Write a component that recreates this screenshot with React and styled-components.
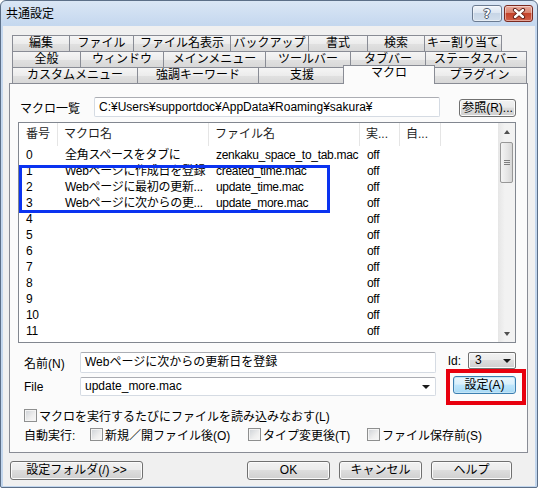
import React from "react";
import styled, { createGlobalStyle } from "styled-components";

const GlobalStyle = createGlobalStyle`
  *, *::before, *::after { box-sizing: border-box; }
  html, body { margin: 0; padding: 0; background: #ffffff; }
  body {
    font-family: "Liberation Sans", "Noto Sans CJK JP", sans-serif;
    font-size: 12px;
    color: #000;
  }
`;

const Window = styled.div`
  width: 538px;
  height: 488px;
  display: flex;
  flex-direction: column;
  padding: 0 2px 1px 2px;
  border: 1px solid #5c6f88;
  border-radius: 6px 6px 2px 2px;
  background: linear-gradient(#dae6f5 0px, #c5d8ef 24px, #c2d6ed 100%);
`;

const TitleBar = styled.div`
  height: 25px;
  flex: none;
  display: flex;
  align-items: flex-start;
  padding-right: 2px;
`;

const Title = styled.div`
  flex: 1;
  line-height: 26px;
  padding-left: 3px;
`;

const CaptionButton = styled.div`
  width: ${(p) => p.$w}px;
  height: 17px;
  margin-top: 4px;
  margin-left: 2px;
  border: 1px solid ${(p) => (p.$close ? "#7b2a20" : "#6b7b91")};
  border-radius: 3px;
  background: ${(p) =>
    p.$close
      ? "linear-gradient(#eaa99b 0%, #d98470 45%, #c4422a 50%, #d0604a 100%)"
      : "linear-gradient(#f0f4fa 0%, #dde6f1 45%, #c7d5e6 50%, #d3dfec 100%)"};
  box-shadow: inset 0 0 0 1px rgba(255, 255, 255, 0.45);
  display: flex;
  align-items: center;
  justify-content: center;
`;

const HelpGlyph = styled.span`
  font-family: "DejaVu Sans", sans-serif;
  font-weight: 700;
  font-size: 12px;
  line-height: 12px;
  color: #ffffff;
  text-shadow: -1px 0 #4a5568, 1px 0 #4a5568, 0 -1px #4a5568, 0 1px #4a5568;
`;

const Client = styled.div`
  flex: 1;
  display: flex;
  flex-direction: column;
  background: #f0f0f0;
  padding: 9px 7px 6px 6px;
`;

const TabStrip = styled.div`
  flex: none;
  display: flex;
  flex-direction: column;
  padding-left: 3px;
`;

const TabRow = styled.div`
  display: flex;
  height: 16px;
`;

const Tab = styled.div`
  position: relative;
  width: ${(p) => p.$w + 1}px;
  height: 16px;
  margin-left: ${(p) => (p.$first ? 0 : -1)}px;
  border: 1px solid #898c95;
  border-bottom: none;
  background: linear-gradient(#f5f5f5 0%, #ececec 50%, #e1e1e1 51%, #d8d8d8 100%);
  text-align: center;
  line-height: 15px;
  white-space: nowrap;
  overflow: hidden;
`;

const ActiveTab = styled(Tab)`
  z-index: 2;
  width: ${(p) => p.$w + 5}px;
  height: 19px;
  margin-top: -2px;
  margin-left: -3px;
  margin-right: -2px;
  background: #fbfbfb;
  line-height: 14px;
`;

const Panel = styled.div`
  flex: 1;
  display: flex;
  flex-direction: column;
  border: 1px solid #898c95;
  background: #fbfbfb;
  padding: 13px 11px 0 8px;
`;

const PathRow = styled.div`
  display: flex;
  height: 20px;
`;

const PathLabel = styled.div`
  width: 76px;
  padding: 4px 0 0 2px;
  line-height: 16px;
`;

const TextBox = styled.div`
  position: relative;
  width: ${(p) => p.$w}px;
  height: ${(p) => p.$h}px;
  border: 1px solid #d5dbe3;
  border-top-color: #abadb3;
  border-radius: 2px;
  background: #ffffff;
  padding-left: 4px;
  line-height: ${(p) => p.$h - 2}px;
  white-space: nowrap;
  overflow: hidden;
`;

const Button = styled.div`
  width: ${(p) => p.$w}px;
  height: ${(p) => p.$h || 19}px;
  border: 1px solid ${(p) => (p.$primary ? "#3c7fb1" : "#707070")};
  border-radius: 3px;
  background: ${(p) =>
    p.$primary
      ? "linear-gradient(#eaf6fd 0%, #d9f0fc 45%, #bee6fd 50%, #a7d9f5 100%)"
      : "linear-gradient(#f2f2f2 0%, #ebebeb 45%, #dddddd 50%, #cfcfcf 100%)"};
  box-shadow: inset 0 0 0 1px ${(p) => (p.$primary ? "#c4e5f6" : "#fbfbfb")};
  text-align: center;
  line-height: ${(p) => (p.$h || 19) - 2}px;
  white-space: nowrap;
`;

const BrowseButton = styled(Button)`
  margin: 2px 0 0 auto;
`;

const ListBox = styled.div`
  margin-top: 5px;
  height: 221px;
  flex: none;
  display: flex;
  border: 1px solid #828790;
  background: #ffffff;
`;

const ListMain = styled.div`
  position: relative;
  flex: 1;
  overflow: hidden;
`;

const HeaderRow = styled.div`
  display: flex;
  height: 23px;
`;

const HeaderCell = styled.div`
  width: ${(p) => p.$w}px;
  flex: ${(p) => (p.$w ? "none" : 1)};
  padding-left: 6px;
  border-right: ${(p) => (p.$w ? "1px solid #e5e5e5" : "none")};
  line-height: 22px;
  color: #1e1e1e;
  white-space: nowrap;
  overflow: hidden;
  &:first-child { padding-left: 7px; }
`;

const Rows = styled.div`
  padding-top: 1px;
`;

const Row = styled.div`
  display: flex;
  height: 16px;
  line-height: 16px;
`;

const Cell = styled.div`
  width: ${(p) => p.$w}px;
  flex: none;
  padding-left: 7px;
  letter-spacing: -0.3px;
  white-space: nowrap;
  overflow: hidden;
`;

const Highlight = styled.div`
  position: absolute;
  left: 0;
  top: 42px;
  width: 311px;
  height: 48px;
  border: 3px solid #0b33f0;
  pointer-events: none;
`;

const ScrollBar = styled.div`
  width: 17px;
  flex: none;
  display: flex;
  flex-direction: column;
  background: linear-gradient(to right, #e6e6e6, #f2f2f2 40%, #f2f2f2);
`;

const ScrollArrow = styled.div`
  height: 17px;
  display: flex;
  align-items: center;
  justify-content: center;
  &::after {
    content: "";
    border-left: 3px solid transparent;
    border-right: 3px solid transparent;
    ${(p) =>
      p.$down ? "border-top: 4px solid #505050;" : "border-bottom: 4px solid #505050;"}
  }
`;

const Track = styled.div`
  flex: 1;
  padding: 2px 2px 0 2px;
`;

const Thumb = styled.div`
  height: 41px;
  border: 1px solid #979797;
  border-radius: 2px;
  background: linear-gradient(to right, #f4f4f4, #e4e4e4 60%, #d6d6d6);
  display: flex;
  align-items: center;
  justify-content: center;
`;

const Grip = styled.div`
  width: 6px;
  height: 5px;
  background: repeating-linear-gradient(#7d7d7d 0 1px, transparent 1px 2px);
`;

const FormArea = styled.div`
  display: flex;
  margin-top: 9px;
  padding-left: 6px;
`;

const FieldsCol = styled.div`
  width: 412px;
  display: flex;
  flex-direction: column;
`;

const FieldRow = styled.div`
  display: flex;
  align-items: center;
  margin-top: ${(p) => p.$gap || 0}px;
`;

const FieldLabel = styled.div`
  width: 56px;
`;

const ComboArrow = styled.span`
  position: absolute;
  right: ${(p) => p.$right}px;
  top: 50%;
  margin-top: -2px;
  border-left: 4px solid transparent;
  border-right: 4px solid transparent;
  border-top: 4px solid #1a1a1a;
`;

const RightCol = styled.div`
  width: 80px;
  display: flex;
  flex-direction: column;
`;

const IdRow = styled.div`
  display: flex;
  align-items: center;
  justify-content: flex-end;
  gap: 7px;
  height: 17px;
`;

const DropList = styled(Button)`
  position: relative;
  text-align: left;
  padding-left: 6px;
  border-radius: 2px;
`;

const RedFrame = styled.div`
  height: 36px;
  margin: 0 -10px 0 10px;
  border: 4px solid #e8000e;
  padding: 3px 0 0 3px;
`;

const CheckRow = styled.div`
  display: flex;
  align-items: center;
  height: ${(p) => p.$h}px;
  padding-left: 6px;
`;

const CheckItem = styled.label`
  display: flex;
  align-items: center;
  width: ${(p) => (p.$w ? `${p.$w}px` : "auto")};
  white-space: nowrap;
`;

const Box = styled.span`
  width: 13px;
  height: 13px;
  margin-right: 2px;
  flex: none;
  border: 1px solid #8e8f8f;
  background: linear-gradient(135deg, #cdd1d6, #eeeeee 60%, #f8f8f8);
  box-shadow: inset 0 0 0 1px #f4f4f4;
`;

const AutoLabel = styled.div`
  width: 66px;
`;

const ButtonRow = styled.div`
  flex: none;
  display: flex;
  gap: 9px;
  margin-top: 8px;
  padding: 0 16px 0 1px;
`;

const Spacer = styled.div`
  flex: 1;
`;

const tabRows = [
  {
    edges: [12, 69, 133, 230, 308, 367, 424, 501],
    labels: ["編集", "ファイル", "ファイル名表示", "バックアップ", "書式", "検索", "キー割り当て"],
  },
  {
    edges: [12, 80, 163, 265, 350, 425, 526],
    labels: ["全般", "ウィンドウ", "メインメニュー", "ツールバー", "タブバー", "ステータスバー"],
  },
  {
    edges: [12, 137, 258, 345, 432, 526],
    labels: ["カスタムメニュー", "強調キーワード", "支援", "マクロ", "プラグイン"],
    active: 3,
  },
];

const cols = [39, 151, 151, 40, 41];

const macros = [
  ["0", "全角スペースをタブに", "zenkaku_space_to_tab.mac"],
  ["1", "Webページに作成日を登録", "created_time.mac"],
  ["2", "Webページに最初の更新...", "update_time.mac"],
  ["3", "Webページに次からの更...", "update_more.mac"],
  ["4", "", ""],
  ["5", "", ""],
  ["6", "", ""],
  ["7", "", ""],
  ["8", "", ""],
  ["9", "", ""],
  ["10", "", ""],
  ["11", "", ""],
];

const CloseIcon = () => (
  <svg width="14" height="11" viewBox="0 0 14 11">
    <path d="M3 2 L11 9 M11 2 L3 9" stroke="#5a1a12" strokeWidth="4.2" strokeLinecap="round" />
    <path d="M3 2 L11 9 M11 2 L3 9" stroke="#ffffff" strokeWidth="2.4" strokeLinecap="round" />
  </svg>
);

const Check = ({ label, w }) => (
  <CheckItem $w={w}>
    <Box />
    {label}
  </CheckItem>
);

const App = () => {
  return (
    <>
      <GlobalStyle />
      <Window>
        <TitleBar>
          <Title>共通設定</Title>
          <CaptionButton $w={30}>
            <HelpGlyph>?</HelpGlyph>
          </CaptionButton>
          <CaptionButton $w={29} $close>
            <CloseIcon />
          </CaptionButton>
        </TitleBar>

        <Client>
          <TabStrip>
            {tabRows.map((row, r) => (
              <TabRow key={r}>
                {row.labels.map((label, i) => {
                  const w = row.edges[i + 1] - row.edges[i];
                  return row.active === i ? (
                    <ActiveTab key={label} $w={w}>{label}</ActiveTab>
                  ) : (
                    <Tab key={label} $w={w} $first={i === 0}>{label}</Tab>
                  );
                })}
              </TabRow>
            ))}
          </TabStrip>

          <Panel>
            <PathRow>
              <PathLabel>マクロ一覧</PathLabel>
              <TextBox $w={346} $h={20}>C:¥Users¥supportdoc¥AppData¥Roaming¥sakura¥</TextBox>
              <BrowseButton $w={57} $h={18}>参照(R)...</BrowseButton>
            </PathRow>

            <ListBox>
              <ListMain>
                <HeaderRow>
                  <HeaderCell $w={cols[0]}>番号</HeaderCell>
                  <HeaderCell $w={cols[1]}>マクロ名</HeaderCell>
                  <HeaderCell $w={cols[2]}>ファイル名</HeaderCell>
                  <HeaderCell $w={cols[3]}>実...</HeaderCell>
                  <HeaderCell $w={cols[4]}>自...</HeaderCell>
                  <HeaderCell />
                </HeaderRow>
                <Rows>
                  {macros.map((m) => (
                    <Row key={m[0]}>
                      <Cell $w={cols[0]}>{m[0]}</Cell>
                      <Cell $w={cols[1]}>{m[1]}</Cell>
                      <Cell $w={cols[2]}>{m[2]}</Cell>
                      <Cell $w={cols[3]}>off</Cell>
                    </Row>
                  ))}
                </Rows>
                <Highlight />
              </ListMain>
              <ScrollBar>
                <ScrollArrow />
                <Track>
                  <Thumb>
                    <Grip />
                  </Thumb>
                </Track>
                <ScrollArrow $down />
              </ScrollBar>
            </ListBox>

            <FormArea>
              <FieldsCol>
                <FieldRow>
                  <FieldLabel>名前(N)</FieldLabel>
                  <TextBox $w={356} $h={21}>Webページに次からの更新日を登録</TextBox>
                </FieldRow>
                <FieldRow $gap={4}>
                  <FieldLabel>File</FieldLabel>
                  <TextBox $w={356} $h={19}>
                    update_more.mac
                    <ComboArrow $right={5} />
                  </TextBox>
                </FieldRow>
              </FieldsCol>
              <RightCol>
                <IdRow>
                  <span>Id:</span>
                  <DropList $w={48} $h={17}>
                    3
                    <ComboArrow $right={4} />
                  </DropList>
                </IdRow>
                <RedFrame>
                  <Button $w={63} $h={18} $primary>設定(A)</Button>
                </RedFrame>
              </RightCol>
            </FormArea>

            <CheckRow $h={20}>
              <Check label="マクロを実行するたびにファイルを読み込みなおす(L)" />
            </CheckRow>
            <CheckRow $h={18}>
              <AutoLabel>自動実行:</AutoLabel>
              <Check w={158} label="新規／開ファイル後(O)" />
              <Check w={119} label="タイプ変更後(T)" />
              <Check label="ファイル保存前(S)" />
            </CheckRow>
          </Panel>

          <ButtonRow>
            <Button $w={133}>設定フォルダ(/) &gt;&gt;</Button>
            <Spacer />
            <Button $w={83}>OK</Button>
            <Button $w={83}>キャンセル</Button>
            <Button $w={81}>ヘルプ</Button>
          </ButtonRow>
        </Client>
      </Window>
    </>
  );
};

export default App;
